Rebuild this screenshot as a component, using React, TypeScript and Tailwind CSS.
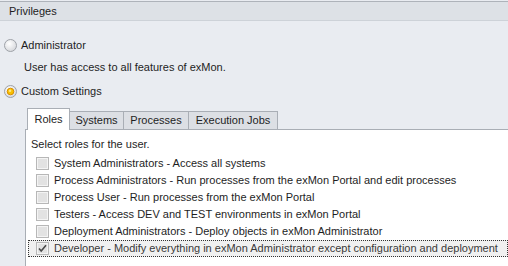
import React from "react";

const roles = [
  { label: "System Administrators - Access all systems", checked: false },
  { label: "Process Administrators - Run processes from the exMon Portal and edit processes", checked: false },
  { label: "Process User - Run processes from the exMon Portal", checked: false },
  { label: "Testers - Access DEV and TEST environments in exMon Portal", checked: false },
  { label: "Deployment Administrators - Deploy objects in exMon Administrator", checked: false },
  { label: "Developer - Modify everything in exMon Administrator except configuration and deployment", checked: true },
];

const tabs = [
  { label: "Roles", w: "w-[43px]" },
  { label: "Systems", w: "w-[54px]" },
  { label: "Processes", w: "w-[65px]" },
  { label: "Execution Jobs", w: "w-[89px]" },
];

function Radio({ checked }: { checked?: boolean }) {
  return (
    <svg width="13" height="13" viewBox="0 0 13 13" className="shrink-0">
      <defs>
        <radialGradient id={checked ? "rg1" : "rg0"} cx="40%" cy="35%" r="70%">
          <stop offset="0%" stopColor="#ffffff" />
          <stop offset="100%" stopColor="#d4d6da" />
        </radialGradient>
      </defs>
      <circle cx="6.5" cy="6.5" r="6" fill={`url(#${checked ? "rg1" : "rg0"})`} stroke="#9ea2a8" />
      {checked && (
        <>
          <circle cx="6.5" cy="6.5" r="3.3" fill="#f7c000" stroke="#d98c00" strokeWidth="1" />
          <circle cx="6" cy="5.8" r="1.3" fill="#ffe680" />
        </>
      )}
    </svg>
  );
}

function Check({ checked }: { checked?: boolean }) {
  return (
    <svg width="13" height="13" viewBox="0 0 13 13" className="shrink-0">
      <rect x="0.5" y="0.5" width="12" height="12" fill="#f4f4f4" stroke="#b7b7b7" />
      <rect x="2" y="2" width="9" height="9" fill="#e2e2e2" />
      {checked && <path d="M3 6.5 L5.2 9 L10 3.2" fill="none" stroke="#4a4a4a" strokeWidth="1.6" />}
    </svg>
  );
}

export default function App() {
  return (
    <div className="w-[508px] h-[266px] overflow-hidden bg-[#e9ecf1] text-[11px] text-[#1e1e1e] font-['Tahoma','Liberation_Sans',sans-serif]">
      {/* header */}
      <div className="mt-px h-[20px] border-t border-b border-t-[#aeb3ba] border-b-[#cdd2d8] bg-[#dde1e6] pl-[9px] leading-[18px]">
        Privileges
      </div>

      <div className="pl-[4px] pt-[17px]">
        <div className="flex items-center gap-[4px] h-[14px]">
          <Radio />
          <span>Administrator</span>
        </div>
        <div className="pl-[20px] mt-[8px] h-[14px] leading-[14px]">User has access to all features of exMon.</div>
        <div className="flex items-center gap-[4px] h-[14px] mt-[10px]">
          <Radio checked />
          <span>Custom Settings</span>
        </div>
      </div>

      {/* tab control */}
      <div className="ml-[25px] mt-[11px]">
        <div className="flex items-end h-[21px] border-b border-[#a9aeb5]">
          {tabs.map((t, i) =>
            i === 0 ? (
              <div
                key={t.label}
                className={`${t.w} ml-[2px] h-[22px] -mb-px pt-[3px] text-center bg-white border border-b-0 border-[#a9aeb5] leading-[14px]`}
              >
                {t.label}
              </div>
            ) : (
              <div
                key={t.label}
                className={`${t.w} h-[18px] text-center bg-[#dcdfe4] border border-l-0 border-b-0 border-[#a9aeb5] leading-[16px]`}
              >
                {t.label}
              </div>
            )
          )}
        </div>
        <div className="h-[200px] bg-white border-l border-[#a9aeb5] pl-[5px] pt-[7px]">
          <div className="h-[14px] leading-[14px]">Select roles for the user.</div>
          <div className="mt-[4px] flex flex-col">
            {roles.map((r) => (
              <div
                key={r.label}
                className={
                  "flex items-center gap-[5px] h-[17px] pl-[5px] " +
                  (r.checked ? "bg-[#f0f0f0] border border-dotted border-[#333] -ml-[3px] pl-[7px] text-[#3a3a3a]" : "")
                }
              >
                <Check checked={r.checked} />
                <span className="whitespace-nowrap">{r.label}</span>
              </div>
            ))}
          </div>
        </div>
      </div>
    </div>
  );
}
